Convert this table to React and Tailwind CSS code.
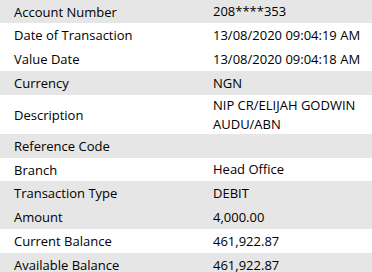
import React from "react";

const rows = [
  { label: "Account Number", value: "208****353", gray: true, h: "h-[23px]" },
  { label: "Date of Transaction", value: "13/08/2020 09:04:19 AM", gray: false, h: "h-[24px]" },
  { label: "Value Date", value: "13/08/2020 09:04:18 AM", gray: false, h: "h-[24px]" },
  { label: "Currency", value: "NGN", gray: true, h: "h-[24px]" },
  { label: "Description", value: "NIP CR/ELIJAH GODWIN AUDU/ABN", gray: false, h: "h-[39px]" },
  { label: "Reference Code", value: "", gray: true, h: "h-[24px]" },
  { label: "Branch", value: "Head Office", gray: false, h: "h-[23px]" },
  { label: "Transaction Type", value: "DEBIT", gray: true, h: "h-[24px]" },
  { label: "Amount", value: "4,000.00", gray: true, h: "h-[24px]" },
  { label: "Current Balance", value: "461,922.87", gray: false, h: "h-[24px]" },
  { label: "Available Balance", value: "461,922.87", gray: true, h: "h-[24px]" },
];

export default function App() {
  return (
    <div className="w-[372px] h-[272px] overflow-hidden bg-white font-['Open_Sans',sans-serif] text-[13px] text-black">
      {rows.map((r, i) => (
        <div
          key={i}
          className={`flex items-center ${r.h} ${r.gray ? "bg-[#e6e6e6]" : "bg-white"}`}
        >
          <div className="w-[213px] pl-[14px] shrink-0 leading-[18px]">{r.label}</div>
          <div className="flex-1 pr-[6px] leading-[19px]">{r.value}</div>
        </div>
      ))}
    </div>
  );
}
